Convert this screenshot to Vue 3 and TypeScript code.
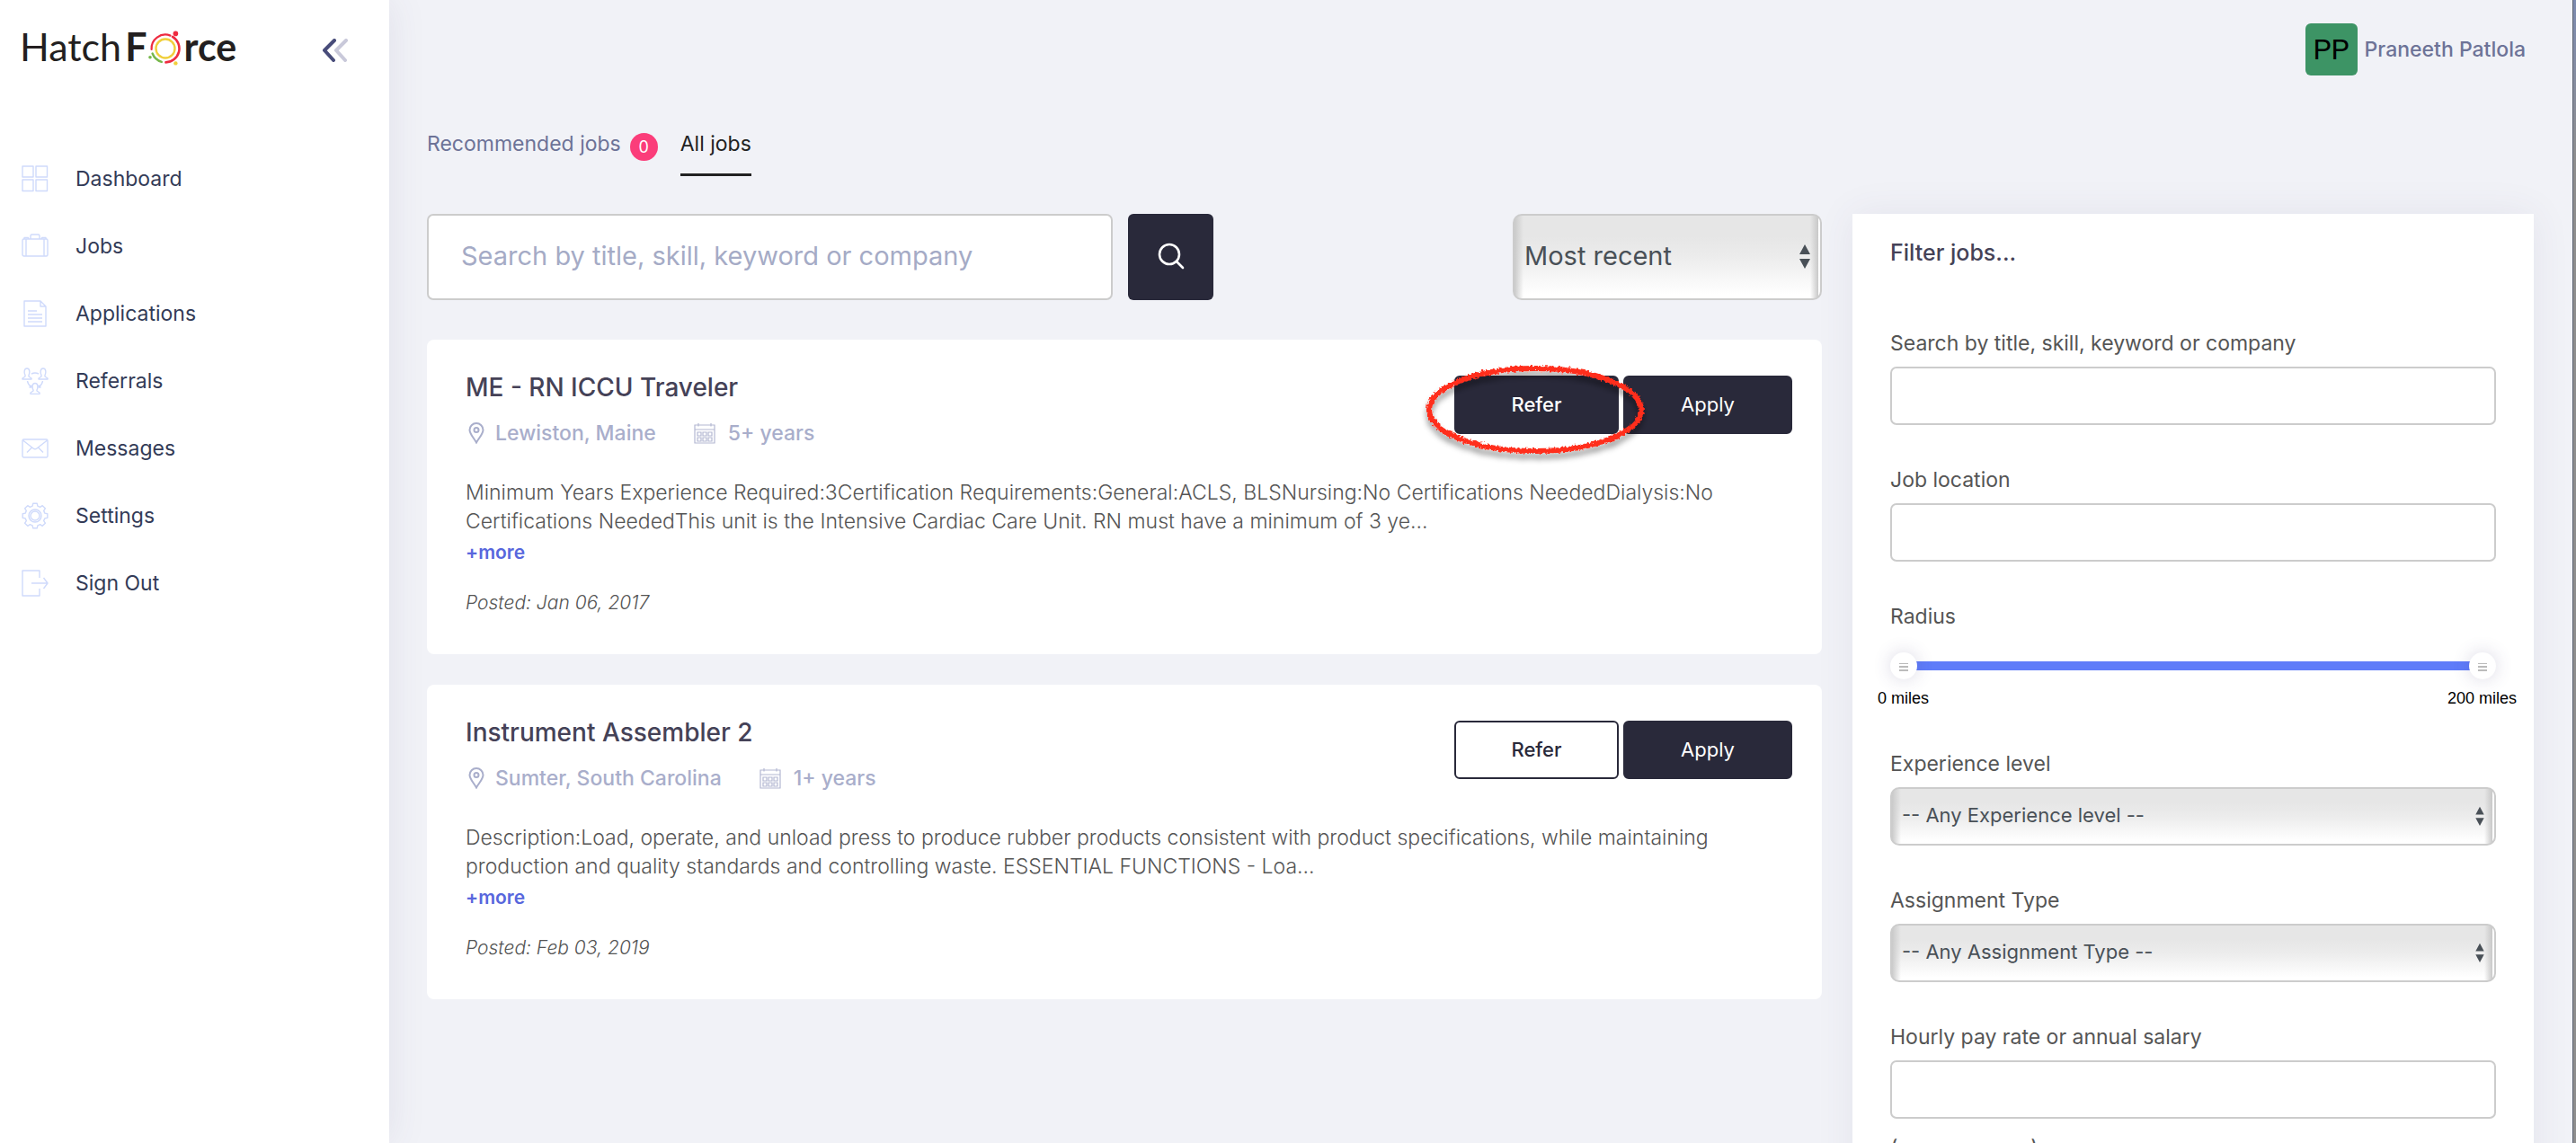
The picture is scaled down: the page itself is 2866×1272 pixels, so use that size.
<script setup lang="ts">
import { ref } from 'vue'

interface NavItem { label: string; icon: string }
interface Job {
  title: string
  location: string
  experience: string
  description: string
  posted: string
  highlighted: boolean
}

const navItems: NavItem[] = [
  { label: 'Dashboard', icon: 'grid' },
  { label: 'Jobs', icon: 'case' },
  { label: 'Applications', icon: 'document' },
  { label: 'Referrals', icon: 'people' },
  { label: 'Messages', icon: 'mail' },
  { label: 'Settings', icon: 'gear' },
  { label: 'Sign Out', icon: 'exit' },
]

const jobs: Job[] = [
  {
    title: 'ME - RN ICCU Traveler',
    location: 'Lewiston, Maine',
    experience: '5+ years',
    description:
      'Minimum Years Experience Required:3Certification Requirements:General:ACLS, BLSNursing:No Certifications NeededDialysis:No Certifications NeededThis unit is the Intensive Cardiac Care Unit. RN must have a minimum of 3 ye...',
    posted: 'Posted: Jan 06, 2017',
    highlighted: true,
  },
  {
    title: 'Instrument Assembler 2',
    location: 'Sumter, South Carolina',
    experience: '1+ years',
    description:
      'Description:Load, operate, and unload press to produce rubber products consistent with product specifications, while maintaining production and quality standards and controlling waste. ESSENTIAL FUNCTIONS - Loa...',
    posted: 'Posted: Feb 03, 2019',
    highlighted: false,
  },
]

const keyword = ref('')
const sort = ref('recent')
const filterKeyword = ref('')
const filterLocation = ref('')
const radiusMin = ref(0)
const radiusMax = ref(200)
const level = ref('')
const assignment = ref('')
const pay = ref('')

// Outline of an eight-toothed cog, centred on 15,15.
const gearPath = (() => {
  const points: string[] = []
  for (let i = 0; i < 8; i++) {
    const base = (i * Math.PI) / 4 - Math.PI / 2
    const steps: [number, number][] = [[-0.26, 11.2], [-0.16, 14], [0.16, 14], [0.26, 11.2]]
    for (const [offset, r] of steps) {
      const a = base + offset
      points.push(`${(15 + r * Math.cos(a)).toFixed(2)} ${(15 + r * Math.sin(a)).toFixed(2)}`)
    }
  }
  return `M${points.join('L')}Z`
})()
</script>

<template>
  <div class="app">
    <aside class="sidebar">
      <div class="brand-row">
        <a class="brand" href="#" aria-label="HatchForce">
          <span>Hatch</span><b class="brand-f">F</b>
          <svg class="brand-o" viewBox="0 0 36 40" aria-hidden="true" fill="none" stroke-linecap="round">
            <circle cx="19" cy="20" r="10.5" stroke="#f0cf3c" stroke-width="2.4" />
            <path d="M3.6 21 A15.4 15.4 0 0 1 24.5 5.6" stroke="#ee2b40" stroke-width="2.2" />
            <path d="M27 6.8 A15.4 15.4 0 0 1 19.5 35.4" stroke="#ee2b40" stroke-width="2.6" />
            <path d="M4.6 25.5 A15.4 15.4 0 0 0 14.8 34.8" stroke="#76b74a" stroke-width="2.4" />
            <circle cx="30.4" cy="3.4" r="2.8" fill="#ee2b40" />
            <circle cx="2" cy="29.8" r="1.8" fill="#76b74a" />
            <circle cx="30.4" cy="36.4" r="2.2" fill="#f0cf3c" />
          </svg>
          <b>rce</b>
        </a>
        <button class="collapse" type="button" aria-label="Collapse menu">
          <svg viewBox="0 0 28 26" fill="none" stroke-width="4" stroke-linecap="round" stroke-linejoin="round">
            <path d="M26 2L15 13L25 24" stroke="#c9c9da" />
            <path d="M13 2L2 13L12 24" stroke="#484c7a" />
          </svg>
        </button>
      </div>

      <nav class="nav">
        <a v-for="item in navItems" :key="item.label" class="nav-item" href="#">
          <svg class="nav-icon" viewBox="0 0 30 30" fill="none" stroke="#cfdafb" stroke-width="1.4" stroke-linejoin="round" aria-hidden="true">
            <template v-if="item.icon === 'grid'">
              <path d="M1 1H13V13H1ZM16 1H28.500V13H16ZM1 16H13V28.500H1ZM16 16H28.500V28.500H16Z" />
            </template>
            <template v-else-if="item.icon === 'case'">
              <rect x="1" y="7" width="28" height="19" rx="1.500" />
              <path d="M5 7V26M25 7V26M3 7V5.500H7.500V7M22.500 7V5.500H27V7M10 7V3.500Q10 2 11.500 2H18.500Q20 2 20 3.500V7" />
            </template>
            <template v-else-if="item.icon === 'document'">
              <path d="M3 1H21L27 7V29H3ZM21 1V7H27M7 12H17M7 16H23M7 20H23M7 24H23" />
            </template>
            <template v-else-if="item.icon === 'people'">
              <path d="M4 8.500C2.500 6 2.700 1 6 1S9.500 6 8 8.500V10L11 12V13H1V12L4 10Z" />
              <path d="M22 8.500C20.500 6 20.700 1 24 1S27.500 6 26 8.500V10L29 12V13H19V12L22 10Z" />
              <path d="M13 25C11.500 22 11.700 17.500 15 17.500S18.500 22 17 25V26L20 28V29.500H10V28L13 26Z" />
              <path d="M11 7Q15 5 19 7M6.500 15Q7 19 11 22M23.500 15Q23 19 19 22M8.500 22H11V19.500M21.500 22H19V19.500" />
            </template>
            <template v-else-if="item.icon === 'mail'">
              <rect x="1" y="5" width="28" height="20" rx="1.500" />
              <path d="M1.500 6L13 15Q15 16.500 17 15L28.500 6M11.500 14L6 19.500M18.500 14L24 19.500" />
            </template>
            <template v-else-if="item.icon === 'gear'">
              <path :d="gearPath" />
              <circle cx="15" cy="15" r="7" />
              <circle cx="15" cy="15" r="5" />
            </template>
            <template v-else>
              <path d="M20 9V1H1V29H20V21M11 15H29M24.500 9L29 15L24.500 21" />
            </template>
          </svg>
          <span>{{ item.label }}</span>
        </a>
      </nav>
    </aside>

    <main class="main">
      <header class="topbar">
        <span class="avatar">PP</span>
        <a class="user" href="#">Praneeth Patlola</a>
      </header>

      <div class="tabs">
        <a class="tab" href="#">Recommended jobs<span class="badge">0</span></a>
        <a class="tab active" href="#" aria-current="page">All jobs</a>
      </div>

      <div class="columns">
        <section class="jobs">
          <form class="search" @submit.prevent>
            <input v-model="keyword" class="search-input" type="text" aria-label="Search jobs" placeholder="Search by title, skill, keyword or company" />
            <button class="search-button" type="submit" aria-label="Search">
              <svg viewBox="0 0 30 30" fill="none" stroke="#fff" stroke-width="2.600" stroke-linecap="round">
                <circle cx="13" cy="13" r="11" />
                <path d="M21 21L28 28" />
              </svg>
            </button>
            <div class="select-box sort">
              <select v-model="sort" class="select large" aria-label="Sort jobs">
                <option value="recent">Most recent</option>
                <option value="oldest">Oldest</option>
              </select>
              <svg class="arrows" viewBox="0 0 14 28" aria-hidden="true"><path d="M7 1L13 12H1ZM1 17H13L7 28Z" /></svg>
            </div>
          </form>

          <article v-for="job in jobs" :key="job.title" class="card">
            <div class="card-head">
              <div>
                <h2 class="card-title">{{ job.title }}</h2>
                <div class="meta">
                  <svg class="pin" viewBox="0 0 18 24" fill="none" stroke="#a9aecb" stroke-width="2" aria-hidden="true">
                    <path d="M9 22.500C6 17 1.500 13 1.500 8.500A7.500 7.500 0 0 1 16.500 8.500C16.500 13 12 17 9 22.500Z" />
                    <circle cx="9" cy="8.500" r="2.500" />
                  </svg>
                  <span class="place">{{ job.location }}</span>
                  <svg class="calendar" viewBox="0 0 24 24" fill="none" stroke="#b4b8d2" stroke-width="1.200" aria-hidden="true">
                    <path d="M1 3H23V23H1ZM1 8H23M5 1V4.500M19 1V4.500M4 11H8V15H4ZM10 11H14V15H10ZM16 11H20V15H16ZM4 17H8V21H4ZM10 17H14V21H10ZM16 17H20V21H16Z" />
                  </svg>
                  <span>{{ job.experience }}</span>
                </div>
              </div>
              <div class="actions">
                <button class="btn refer" :class="{ filled: job.highlighted }" type="button">Refer</button>
                <button class="btn filled" type="button">Apply</button>
                <svg v-if="job.highlighted" class="marker" viewBox="0 0 260 130" fill="none" aria-hidden="true">
                  <defs>
                    <filter id="rough" x="-10%" y="-20%" width="120%" height="150%">
                      <feTurbulence type="fractalNoise" baseFrequency="0.35" numOctaves="2" seed="4" />
                      <feDisplacementMap in="SourceGraphic" scale="5" xChannelSelector="R" yChannelSelector="G" result="line" />
                      <feDropShadow in="line" dx="0" dy="6" stdDeviation="3" flood-color="#000" flood-opacity="0.4" />
                    </filter>
                  </defs>
                  <ellipse cx="131" cy="60" rx="118" ry="46" stroke="#ff2d1b" stroke-width="6" filter="url(#rough)" />
                </svg>
              </div>
            </div>
            <p class="description">{{ job.description }}</p>
            <a class="more" href="#">+more</a>
            <p class="posted">{{ job.posted }}</p>
          </article>
        </section>

        <aside class="filters">
          <h2 class="filters-title">Filter jobs...</h2>

          <div class="field">
            <label class="label" for="f-keyword">Search by title, skill, keyword or company</label>
            <input id="f-keyword" v-model="filterKeyword" class="input" type="text" />
          </div>

          <div class="field">
            <label class="label" for="f-location">Job location</label>
            <input id="f-location" v-model="filterLocation" class="input" type="text" />
          </div>

          <div class="field">
            <label class="label" for="f-radius-min">Radius</label>
            <div class="slider">
              <div class="track"></div>
              <input id="f-radius-min" v-model.number="radiusMin" class="range" type="range" min="0" max="200" />
              <input v-model.number="radiusMax" class="range" type="range" min="0" max="200" aria-label="Maximum radius" />
            </div>
            <div class="miles">
              <span>{{ radiusMin }} miles</span>
              <span>{{ radiusMax }} miles</span>
            </div>
          </div>

          <div class="field">
            <label class="label" for="f-level">Experience level</label>
            <div class="select-box">
              <select id="f-level" v-model="level" class="select">
                <option value="">-- Any Experience level --</option>
              </select>
              <svg class="arrows small" viewBox="0 0 14 28" aria-hidden="true"><path d="M7 1L13 12H1ZM1 17H13L7 28Z" /></svg>
            </div>
          </div>

          <div class="field">
            <label class="label" for="f-assignment">Assignment Type</label>
            <div class="select-box">
              <select id="f-assignment" v-model="assignment" class="select">
                <option value="">-- Any Assignment Type --</option>
              </select>
              <svg class="arrows small" viewBox="0 0 14 28" aria-hidden="true"><path d="M7 1L13 12H1ZM1 17H13L7 28Z" /></svg>
            </div>
          </div>

          <div class="field">
            <label class="label" for="f-pay">Hourly pay rate or annual salary</label>
            <input id="f-pay" v-model="pay" class="input" type="text" />
            <p class="hint">(as per annum)</p>
          </div>
        </aside>
      </div>
    </main>
    <div class="edge"></div>
  </div>
</template>

<style>
body {
  margin: 0;
  background: #f1f2f7;
}
</style>

<style scoped>
* {
  box-sizing: border-box;
}

.app {
  display: flex;
  height: 100vh;
  overflow: hidden;
  font-family: Inter, "Open Sans", sans-serif;
  font-size: 23px;
  color: #555;
}

a {
  color: inherit;
  text-decoration: none;
}

h2,
p {
  margin: 0;
}

button,
input,
select {
  font-family: inherit;
  margin: 0;
}

.sidebar {
  flex: none;
  width: 433px;
  background: #fff;
  box-shadow: 0 0 40px rgba(80, 70, 120, 0.1);
}

.brand-row {
  display: flex;
  align-items: center;
  justify-content: space-between;
  height: 112px;
  padding: 0 46px 0 22px;
}

.brand {
  display: flex;
  align-items: center;
  padding-bottom: 8px;
  font-family: Lato, sans-serif;
  font-size: 43px;
  line-height: 50px;
  color: #231f20;
}

.brand-f {
  margin-left: 4px;
}

.brand-o {
  width: 36px;
  height: 40px;
  margin: 4px 3px 0 2px;
}

.collapse {
  display: flex;
  padding: 0;
  border: 0;
  background: none;
}

.collapse svg {
  width: 28px;
  height: 26px;
}

.nav {
  display: flex;
  flex-direction: column;
  margin-top: 49px;
}

.nav-item {
  display: flex;
  align-items: center;
  gap: 30px;
  height: 75px;
  padding-left: 24px;
  color: #333b57;
}

.nav-icon {
  width: 30px;
  height: 30px;
}

.main {
  flex: 1;
  min-width: 0;
  padding: 0 43px 0 42px;
}

.topbar {
  display: flex;
  align-items: center;
  justify-content: flex-end;
  gap: 8px;
  height: 110px;
  padding-right: 9px;
}

.avatar {
  width: 58px;
  height: 58px;
  border-radius: 6px;
  background: #3d9465;
  color: #000;
  font-family: Roboto, sans-serif;
  font-size: 32px;
  line-height: 58px;
  text-align: center;
}

.user {
  font-weight: 500;
  color: #6d7397;
}

.tabs {
  display: flex;
  align-items: flex-start;
  gap: 25px;
  margin-top: 32px;
  line-height: 36px;
}

.tab {
  display: flex;
  align-items: flex-start;
  color: #6d7397;
}

.tab.active {
  padding-bottom: 15px;
  border-bottom: 3px solid #222;
  color: #222;
}

.badge {
  width: 31px;
  height: 31px;
  margin: 6px 0 0 10px;
  border-radius: 50%;
  background: #fb3d7a;
  color: #fff;
  font-size: 18px;
  line-height: 31px;
  text-align: center;
}

.columns {
  display: grid;
  grid-template-columns: minmax(0, 1552fr) minmax(0, 758fr);
  gap: 34px;
  margin-top: 42px;
}

.search {
  display: flex;
  height: 96px;
  margin-bottom: 44px;
}

.search-input {
  flex: 0 1 763px;
  min-width: 0;
  padding: 0 37px 3px 36px;
  border: 2px solid #ccc;
  border-radius: 7px;
  background: #fff;
  font-size: 29px;
  color: #495057;
}

.search-input::placeholder {
  color: #a5abc6;
  opacity: 1;
}

.search-button {
  display: flex;
  align-items: center;
  justify-content: center;
  width: 95px;
  margin-left: 17px;
  padding: 0 0 2px;
  border: 0;
  border-radius: 6px;
  background: #29293a;
}

.search-button svg {
  width: 30px;
  height: 30px;
}

.select-box {
  position: relative;
  height: 65px;
}

.select-box.sort {
  width: 344px;
  height: 96px;
  margin-left: auto;
}

.select {
  display: block;
  width: 100%;
  height: 100%;
  padding: 0 11px 3px;
  border: 2px solid #ccc;
  border-radius: 10px;
  appearance: none;
  background:
    linear-gradient(to right, #cacaca, rgba(215, 215, 215, 0)) left / 10px 100% no-repeat,
    linear-gradient(to left, #fff 2px, #c8c8c8 2px, rgba(215, 215, 215, 0)) right / 11px 100% no-repeat,
    linear-gradient(#e6e6e6 25%, #ececec 50%, #fff 95%);
  font-size: 22px;
  color: #495057;
}

.select.large {
  font-size: 29px;
}

.arrows {
  position: absolute;
  top: 50%;
  right: 12px;
  width: 14px;
  height: 28px;
  margin-top: -15px;
  fill: #495057;
  pointer-events: none;
}

.arrows.small {
  width: 12px;
  height: 22px;
  margin-top: -12px;
}

.card {
  margin-bottom: 34px;
  padding: 35px 33px 41px 43px;
  border-radius: 8px;
  background: #fff;
}

.card-head {
  display: flex;
  justify-content: space-between;
  align-items: flex-start;
}

.card-title {
  font-size: 28px;
  font-weight: 500;
  line-height: 36px;
  color: #454257;
}

.meta {
  display: flex;
  align-items: center;
  margin-top: 17px;
  line-height: 32px;
  font-weight: 500;
  color: #a9aecb;
}

.pin {
  width: 18px;
  height: 24px;
  margin: 0 12px 0 3px;
}

.calendar {
  width: 24px;
  height: 24px;
  margin: 0 14px 0 42px;
}

.actions {
  position: relative;
  display: flex;
  gap: 5px;
  margin-top: 5px;
}

.btn {
  width: 188px;
  height: 65px;
  padding: 0 0 2px;
  border: 2px solid #29293a;
  border-radius: 6px;
  background: #fff;
  color: #29293a;
  font-size: 22px;
}

.btn.refer {
  width: 183px;
  font-weight: 500;
}

.btn.filled {
  background: #29293a;
  color: #fff;
}

.marker {
  position: absolute;
  top: -22px;
  left: -41px;
  width: 260px;
  height: 130px;
  overflow: visible;
  pointer-events: none;
}

.description {
  margin-top: 34px;
  padding-right: 60px;
  font-size: 23px;
  font-weight: 300;
  line-height: 32px;
}

.more {
  display: block;
  margin-top: 3px;
  font-size: 21px;
  font-weight: 600;
  line-height: 32px;
  color: #5867dd;
}

.posted {
  margin-top: 24px;
  font-size: 21px;
  font-style: italic;
  font-weight: 300;
  line-height: 32px;
}

.filters {
  padding: 25px 42px 60px;
  background: #fff;
  box-shadow: 0 0 40px rgba(80, 70, 120, 0.08);
}

.filters-title {
  margin-bottom: 68px;
  font-size: 25px;
  font-weight: 500;
  line-height: 36px;
  color: #454257;
}

.field {
  margin-bottom: 46px;
}

.label {
  display: block;
  margin-bottom: 11px;
  line-height: 30px;
}

.input {
  display: block;
  width: 100%;
  height: 65px;
  padding: 0 20px;
  border: 2px solid #ccc;
  border-radius: 7px;
  background: #fff;
  font-size: 22px;
  color: #495057;
}

.slider {
  position: relative;
  display: flex;
  align-items: center;
  height: 30px;
  margin-top: 25px;
}

.track {
  flex: 1;
  height: 10px;
  margin: 0 15px;
  background: #5f7cf9;
}

.range {
  position: absolute;
  inset: 0;
  width: 100%;
  height: 30px;
  appearance: none;
  background: none;
  pointer-events: none;
}

.range::-webkit-slider-thumb {
  width: 30px;
  height: 30px;
  border-radius: 50%;
  appearance: none;
  background:
    linear-gradient(#bbb, #bbb) 10px 12px / 10px 1px no-repeat,
    linear-gradient(#bbb, #bbb) 10px 15px / 10px 2px no-repeat,
    linear-gradient(#bbb, #bbb) 10px 19px / 10px 2px no-repeat,
    #fff;
  box-shadow: 0 0 20px rgba(70, 60, 120, 0.2);
  pointer-events: auto;
}

.miles {
  display: flex;
  justify-content: space-between;
  margin: 9px -23px 0 -14px;
  font-family: "Liberation Sans", Arial, sans-serif;
  font-size: 18px;
  line-height: 24px;
  color: #000;
}

.hint {
  margin-top: 17px;
  line-height: 30px;
}

.edge {
  flex: none;
  width: 4px;
  border-left: 1px solid #5d6472;
  background: linear-gradient(#7d8bb0, #8e8e8e 180px);
}
</style>
